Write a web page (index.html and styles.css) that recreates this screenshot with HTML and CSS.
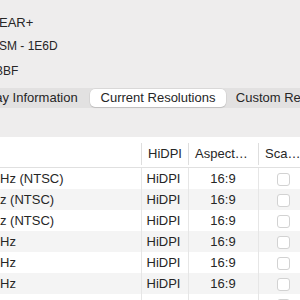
FILE: index.html
```html
<!DOCTYPE html>
<html>
<head>
    <title>Display Modes</title>
    <link rel="stylesheet" href="styles.css">
</head>
<body>

<div class="window">
    <div class="info">
        <div class="info-title">EAR+</div>
        <div class="info-line">SM - 1E6D</div>
        <div class="info-line serial">BBF</div>
    </div>

    <div class="tabs">
        <div class="tab">Display Information</div>
        <div class="tab active">Current Resolutions</div>
        <div class="tab">Custom Resolutions</div>
    </div>

    <table class="modes">
        <colgroup>
            <col class="col-mode">
            <col class="col-hidpi">
            <col class="col-aspect">
            <col class="col-scaled">
        </colgroup>
        <thead>
            <tr>
                <th></th>
                <th><span class="head">HiDPI</span></th>
                <th><span class="head">Aspect…</span></th>
                <th><span class="head">Sca…</span></th>
            </tr>
        </thead>
        <tbody>
            <tr>
                <td class="mode">Hz (NTSC)</td>
                <td>HiDPI</td>
                <td class="center">16:9</td>
                <td class="center"><span class="check"></span></td>
            </tr>
            <tr>
                <td class="mode">z (NTSC)</td>
                <td>HiDPI</td>
                <td class="center">16:9</td>
                <td class="center"><span class="check"></span></td>
            </tr>
            <tr>
                <td class="mode">z (NTSC)</td>
                <td>HiDPI</td>
                <td class="center">16:9</td>
                <td class="center"><span class="check"></span></td>
            </tr>
            <tr>
                <td class="mode">Hz</td>
                <td>HiDPI</td>
                <td class="center">16:9</td>
                <td class="center"><span class="check"></span></td>
            </tr>
            <tr>
                <td class="mode">Hz</td>
                <td>HiDPI</td>
                <td class="center">16:9</td>
                <td class="center"><span class="check"></span></td>
            </tr>
            <tr>
                <td class="mode">Hz</td>
                <td>HiDPI</td>
                <td class="center">16:9</td>
                <td class="center"><span class="check"></span></td>
            </tr>
            <tr>
                <td class="mode">Hz</td>
                <td>HiDPI</td>
                <td class="center">16:9</td>
                <td class="center"><span class="check"></span></td>
            </tr>
        </tbody>
    </table>
</div>

</body>
</html>
```

FILE: styles.css
```css
body {
    font-family: "Liberation Sans", Arial, sans-serif;
    background-color: #eeeded;
    color: #262626;
    margin: 0;
    padding: 0;
    overflow: hidden;
}
.window {
    width: 300px;
    height: 300px;
    overflow: hidden;
}
.info {
    padding-top: 11px;
    margin-left: -1px;
}
.info-title {
    font-size: 13px;
    line-height: 23px;
}
.info-line {
    font-size: 12px;
    line-height: 24px;
}
.info-line + .info-line {
    margin-top: 1px;
}
.serial {
    margin-left: -4px;
}
.tabs {
    display: flex;
    margin-top: 5px;
    margin-left: -47px;
    width: 420px;
    padding: 1px;
    background-color: #e2e1e1;
    border-radius: 6px;
}
.tab {
    flex: 0 0 136px;
    font-size: 13px;
    line-height: 18px;
    text-align: center;
    white-space: nowrap;
}
.tab.active {
    background-color: white;
    border-radius: 5px;
    box-shadow: 0 0 0 0.5px rgba(0, 0, 0, 0.08), 0 1px 1px rgba(0, 0, 0, 0.12);
}
.modes {
    margin-top: 29px;
    width: 308px;
    table-layout: fixed;
    border-collapse: collapse;
    background-color: white;
    font-size: 13px;
}
.col-mode { width: 141px; }
.col-hidpi { width: 47px; }
.col-aspect { width: 70px; }
.col-scaled { width: 50px; }
.modes th {
    padding: 6px 0 2px 0;
    font-weight: normal;
    text-align: left;
    border-bottom: 1px solid #e0e0e0;
}
.modes .head {
    display: block;
    line-height: 22px;
    padding-left: 6px;
    border-left: 1px solid #dedede;
    white-space: nowrap;
    overflow: hidden;
}
.modes td {
    height: 21px;
    padding: 0 0 0 5px;
    border-left: 1px solid #e6e6e6;
    white-space: nowrap;
    overflow: hidden;
}
.modes td.mode {
    padding-left: 0;
    border-left: none;
}
.modes td.center {
    padding-left: 0;
    text-align: center;
}
.modes tbody tr:nth-child(even) {
    background-color: #f4f4f4;
}
.check {
    display: inline-block;
    width: 11px;
    height: 11px;
    border: 1px solid #d2d2d2;
    border-radius: 3px;
    background-color: white;
    vertical-align: middle;
}
```
